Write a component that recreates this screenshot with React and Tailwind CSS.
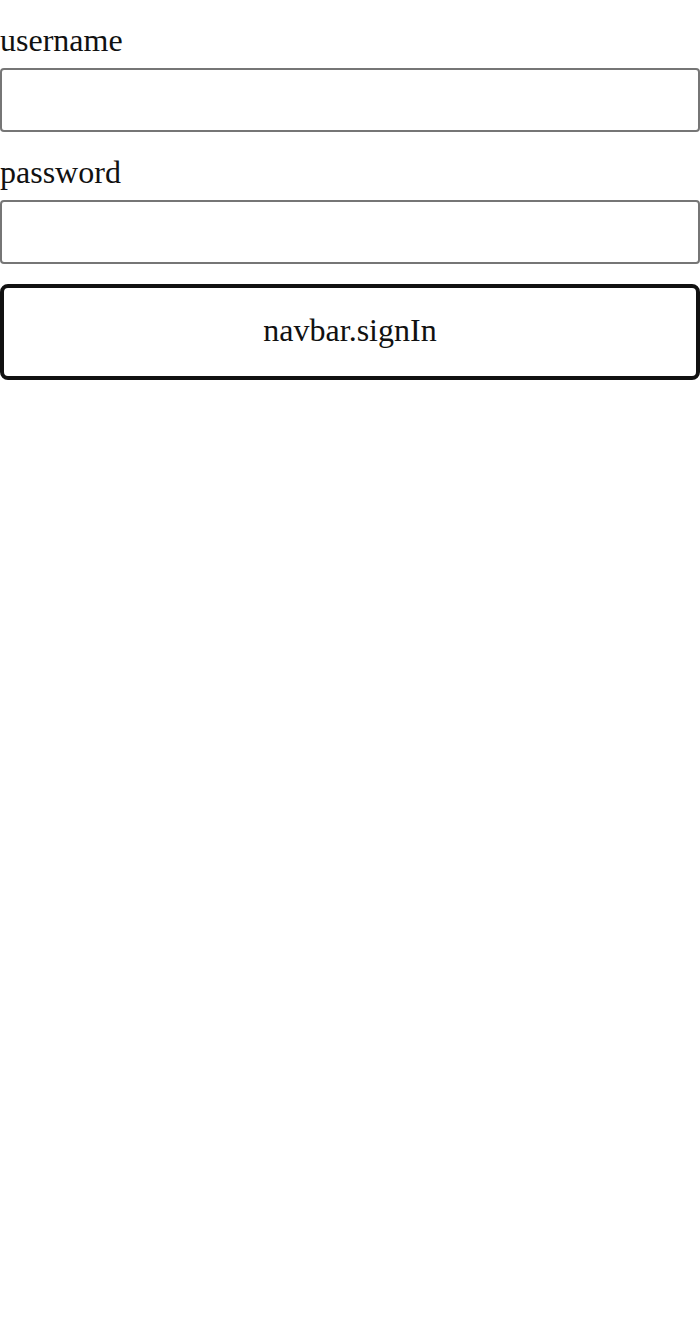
import React, { useState } from 'react';

export default function App() {
  const [username, setUsername] = useState('');
  const [password, setPassword] = useState('');

  return (
    <div className="min-h-[1334px] w-[700px] bg-white font-['Liberation_Serif',serif] text-[32px] leading-[36px] text-[#111]">
      <form className="flex flex-col" onSubmit={e => e.preventDefault()}>
        <label className="mt-[22px] block">username</label>
        <input
          type="text"
          value={username}
          onChange={e => setUsername(e.target.value)}
          className="mt-[10px] h-[64px] w-full rounded-[4px] border-2 border-[#767676] bg-white px-2"
        />
        <label className="mt-[22px] block">password</label>
        <input
          type="password"
          value={password}
          onChange={e => setPassword(e.target.value)}
          className="mt-[10px] h-[64px] w-full rounded-[4px] border-2 border-[#767676] bg-white px-2"
        />
        <button
          type="submit"
          className="mt-[20px] h-[96px] w-full rounded-[8px] border-4 border-[#111] bg-white pb-[4px] text-[32px] text-[#111]"
        >
          navbar.signIn
        </button>
      </form>
    </div>
  );
}
